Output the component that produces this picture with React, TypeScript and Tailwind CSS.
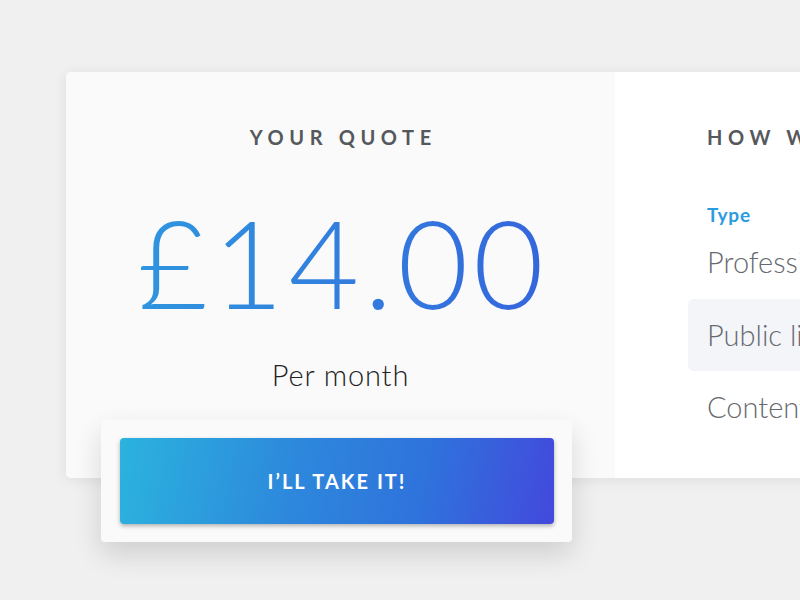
import React from "react";

export default function App() {
  return (
    <div className="w-[800px] h-[600px] bg-[#f0f0f0] overflow-hidden pt-[72px] pl-[66px]" style={{ fontFamily: "Lato, 'Noto Sans', sans-serif" }}>
      <div className="flex w-[760px] h-[406px] rounded-[5px] bg-white shadow-[0_2px_14px_rgba(0,0,0,0.08)]">
        <div className="w-[549px] shrink-0 bg-[#fafafa] rounded-l-[5px] flex flex-col items-center">
          <div className="mt-[55px] h-[20px] leading-[20px] text-[20px] font-bold tracking-[0.28em] text-[#55585c] pl-[0.28em]">YOUR QUOTE</div>
          <div className="mt-[50px] h-[130px] leading-[130px] text-[122px] font-light text-transparent bg-clip-text bg-gradient-to-r from-[#2f96df] to-[#3565dc] tracking-[0.04em] pl-[0.04em]">
            £14.00
          </div>
          <div className="mt-[30px] h-[36px] leading-[36px] text-[29px] font-light text-[#222] tracking-[0.03em]">Per month</div>
          <div className="mt-[27px] ml-[-8px] relative z-10 w-[471px] h-[122px] bg-[#fafafa] rounded-[4px] shadow-[0_12px_28px_rgba(0,0,0,0.14)] p-[18px] pl-[19px]">
            <button className="w-[434px] h-[86px] rounded-[4px] bg-[linear-gradient(100deg,#2bb3de_0%,#2d88dc_40%,#2f72dc_70%,#4349dc_100%)] shadow-[0_2px_4px_rgba(0,0,0,0.3)] text-white font-bold text-[20px] tracking-[0.1em]">
              I’LL TAKE IT!
            </button>
          </div>
        </div>
        <div className="flex-1 min-w-0 bg-white rounded-r-[5px] overflow-hidden pl-[73px] whitespace-nowrap">
          <div className="mt-[55px] pl-[19px] h-[20px] leading-[20px] text-[20px] font-bold tracking-[0.28em] text-[#55585c]">HOW WE WORKED IT OUT</div>
          <div className="mt-[58px] pl-[19px] h-[20px] leading-[20px] text-[19px] font-bold text-[#2b9be0] tracking-[0.04em]">Type</div>
          <div className="mt-[19px] h-[36px] leading-[36px] pl-[19px] text-[29px] font-light text-[#666a70]">Professional indemnity</div>
          <div className="mt-[19px] h-[72px] leading-[72px] pl-[19px] rounded-l-[6px] bg-[#f4f5f9] text-[29px] font-light text-[#666a70]">Public liability</div>
          <div className="h-[72px] leading-[72px] pl-[19px] text-[29px] font-light text-[#666a70]">Contents insurance</div>
        </div>
      </div>
    </div>
  );
}
